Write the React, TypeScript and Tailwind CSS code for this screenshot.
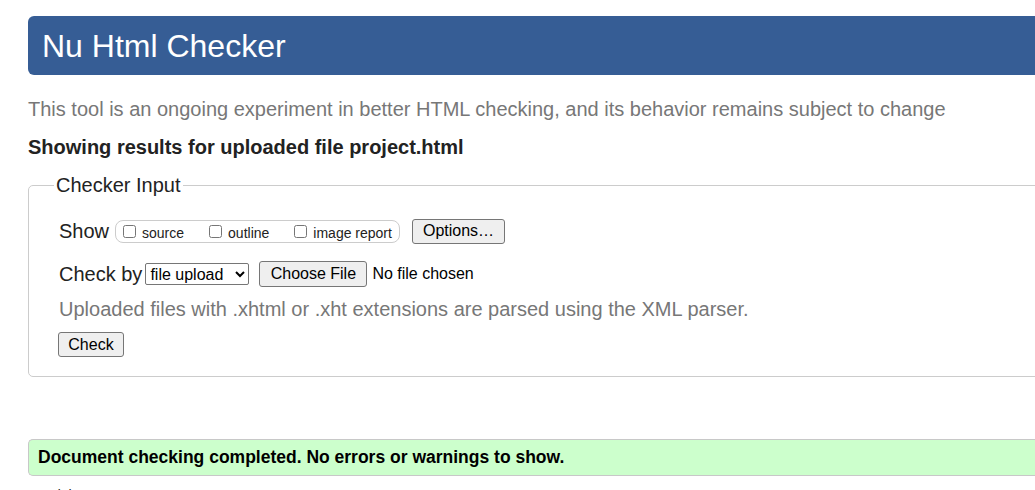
import React from "react";

export default function App() {
  const btn =
    "bg-[#efefef] border border-[#767676] rounded-[3px] text-black leading-none";
  return (
    <div
      className="w-full h-[490px] overflow-hidden bg-white text-[#222]"
      style={{ fontFamily: '"Liberation Sans", Arial, sans-serif' }}
    >
      <div className="pl-[28px] w-[1100px]">
        <h1 className="mt-[16px] h-[59px] bg-[#365d95] rounded-l-[6px] text-white text-[32px] leading-none flex items-center pl-[14px]">
          Nu Html Checker
        </h1>
        <p className="mt-[22px] text-[20px] leading-[24px] text-[#777]">
          This tool is an ongoing experiment in better HTML checking, and its
          behavior remains subject to change
        </p>
        <p className="mt-[14px] text-[20px] leading-[24px] font-bold text-[#222]">
          Showing results for uploaded file project.html
        </p>
        <fieldset className="mt-[14px] border border-[#ccc] rounded-[5px] h-[204px] p-0">
          <legend className="ml-[25px] px-[2px] text-[20px] leading-[24px] text-[#222]">
            Checker Input
          </legend>
          <div className="pl-[30px]">
            <div className="flex items-center h-[26px] mt-[21px]">
              <span className="text-[20px] text-[#222] leading-none">Show</span>
              <div className="ml-[6px] h-[23px] w-[285px] border border-[#ccc] rounded-[8px] flex items-center text-[14px] leading-none text-[#222]">
                <label className="flex items-center ml-[7px]">
                  <input type="checkbox" className="w-[13px] h-[13px] m-0" />
                  <span className="ml-[6px] mt-[4px]">source</span>
                </label>
                <label className="flex items-center ml-[25px]">
                  <input type="checkbox" className="w-[13px] h-[13px] m-0" />
                  <span className="ml-[6px] mt-[4px]">outline</span>
                </label>
                <label className="flex items-center ml-[25px]">
                  <input type="checkbox" className="w-[13px] h-[13px] m-0" />
                  <span className="ml-[6px] mt-[4px]">image report</span>
                </label>
              </div>
              <button className={`${btn} ml-[12px] h-[25px] w-[93px] text-[16px]`}>
                Options…
              </button>
            </div>
            <div className="flex items-center h-[26px] mt-[17px]">
              <span className="text-[20px] text-[#222] leading-none">Check by</span>
              <select className="ml-[3px] h-[22px] w-[104px] border border-[#767676] rounded-[2px] bg-white text-[16px] leading-none text-black">
                <option>file upload</option>
              </select>
              <button className={`${btn} ml-[10px] h-[26px] w-[108px] text-[16px]`}>
                Choose File
              </button>
              <span className="ml-[5px] text-[16px] text-black">No file chosen</span>
            </div>
            <p className="mt-[10px] text-[20px] leading-[24px] text-[#777]">
              Uploaded files with .xhtml or .xht extensions are parsed using the
              XML parser.
            </p>
            <button className={`${btn} mt-[11px] -ml-[1px] h-[25px] w-[66px] text-[16px]`}>
              Check
            </button>
          </div>
        </fieldset>
        <div className="mt-[62px] h-[37px] bg-[#ccffcc] border-y border-l border-[#c8c8c8] rounded-l-[5px] flex items-center pl-[9px]">
          <span className="text-[17.5px] font-bold text-black">
            Document checking completed. No errors or warnings to show.
          </span>
        </div>
        <p className="mt-[9px] text-[14px] leading-[20px] text-[#222]">
          Used the HTML parser.
        </p>
      </div>
    </div>
  );
}
